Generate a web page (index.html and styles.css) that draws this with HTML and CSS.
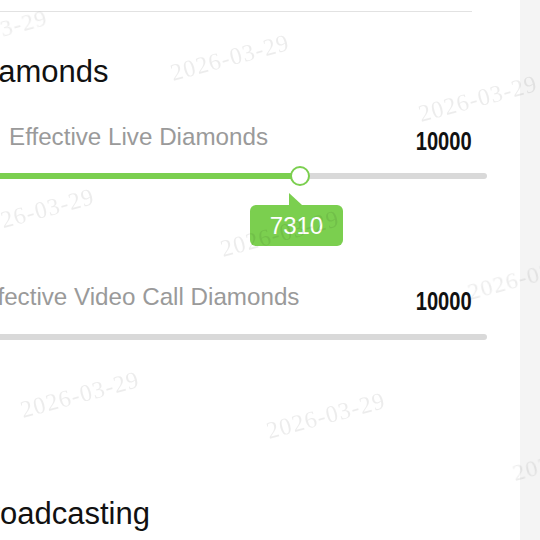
FILE: index.html
```html
<!DOCTYPE html>
<html>
<head>
<meta charset="utf-8">
<link rel="stylesheet" href="styles.css">
</head>
<body>
<div class="page">
  <main class="card">
    <div class="inner">
      <div class="divider"></div>
      <h2 class="heading">Diamonds</h2>

      <div class="row row-live">
        <span class="label">Effective Live Diamonds</span>
        <span class="total">10000</span>
      </div>
      <div class="slider">
        <div class="fill" style="width: 65.05%"></div>
        <div class="thumb" style="left: 65.05%">
          <span class="knob"></span>
          <span class="arrow"></span>
          <span class="bubble">7310</span>
        </div>
      </div>

      <div class="row row-video">
        <span class="label">Effective Video Call Diamonds</span>
        <span class="total">10000</span>
      </div>
      <div class="slider slider-second"></div>

      <h2 class="heading heading-second">Broadcasting</h2>
    </div>
  </main>
  <aside class="side"></aside>
</div>

<div class="watermarks">
  <span class="wm w1">2026-03-29</span>
  <span class="wm w2">2026-03-29</span>
  <span class="wm w3">2026-03-29</span>
  <span class="wm w4">2026-03-29</span>
  <span class="wm w5">2026-03-29</span>
  <span class="wm w6">2026-03-29</span>
  <span class="wm w7">2026-03-29</span>
  <span class="wm w8">2026-03-29</span>
  <span class="wm w9">2026-03-29</span>
</div>
</body>
</html>
```

FILE: styles.css
```css
html, body {
  margin: 0;
  padding: 0;
  width: 540px;
  height: 540px;
  overflow: hidden;
  background: #ffffff;
  font-family: "Liberation Sans", Arial, sans-serif;
}

.page {
  display: flex;
  width: 540px;
  height: 540px;
}

.card {
  width: 520px;
  flex: none;
  background: #ffffff;
  overflow: hidden;
  padding-top: 11px;
  box-sizing: border-box;
}

.side {
  flex: 1;
  background: #f4f4f4;
}

.inner {
  margin-left: -48px;
  width: 520px;
}

.divider {
  height: 1px;
  background: #e2e2e2;
}

.heading {
  margin: 42px 0 0 0;
  padding-left: 17px;
  font-size: 31px;
  line-height: 36px;
  font-weight: normal;
  color: #111111;
  white-space: nowrap;
}

.heading-second {
  margin-top: 156px;
}

.row {
  display: flex;
  justify-content: space-between;
  align-items: flex-start;
  margin-top: 33px;
  height: 28px;
}

.row-live {
  padding-left: 57px;
}

.row-video {
  padding-left: 23px;
  margin-top: 104px;
}

.label {
  font-size: 24.2px;
  line-height: 28px;
  color: #9a9a9a;
  white-space: nowrap;
}

.total {
  margin-top: 4px;
  font-family: "Liberation Sans", Arial, sans-serif;
  font-weight: bold;
  font-size: 26.5px;
  line-height: 28px;
  color: #111111;
  transform: scaleX(0.76);
  transform-origin: right center;
}

.slider {
  position: relative;
  margin-top: 22px;
  margin-right: -15px;
  height: 6px;
  border-radius: 3px;
  background: #d9d9d9;
}

.slider-second {
  margin-top: 23px;
}

.fill {
  height: 100%;
  border-radius: 3px;
  background: #7bcf4f;
}

.thumb {
  position: absolute;
  top: 3px;
  width: 0;
  height: 0;
}

.knob {
  position: absolute;
  left: -10px;
  top: -10px;
  width: 20px;
  height: 20px;
  box-sizing: border-box;
  border-radius: 50%;
  border: 2.5px solid #7bcf4f;
  background: #ffffff;
}

.arrow {
  position: absolute;
  left: -11px;
  top: 17px;
  width: 13px;
  height: 12px;
  background: #7bcf4f;
  clip-path: polygon(0 0, 0 100%, 100% 100%);
}

.bubble {
  position: absolute;
  left: -50px;
  top: 29px;
  width: 93px;
  height: 41px;
  border-radius: 6px;
  background: #7bcf4f;
  color: #ffffff;
  font-size: 24px;
  line-height: 41px;
  text-align: center;
}

.watermarks {
  position: fixed;
  inset: 0;
  pointer-events: none;
}

.wm {
  position: absolute;
  transform: translate(-50%, -50%) rotate(-15deg);
  font-family: "Liberation Serif", "Times New Roman", serif;
  font-size: 24px;
  letter-spacing: 1px;
  white-space: nowrap;
  color: rgba(0, 0, 0, 0.075);
}

.w1 { left: -12px; top: 33px; }
.w2 { left: 230px; top: 58px; }
.w3 { left: 478px; top: 99px; }
.w4 { left: 35px; top: 212px; }
.w5 { left: 280px; top: 234px; }
.w6 { left: 527px; top: 277px; }
.w7 { left: 80px; top: 395px; }
.w8 { left: 326px; top: 416px; }
.w9 { left: 572px; top: 458px; }
```
